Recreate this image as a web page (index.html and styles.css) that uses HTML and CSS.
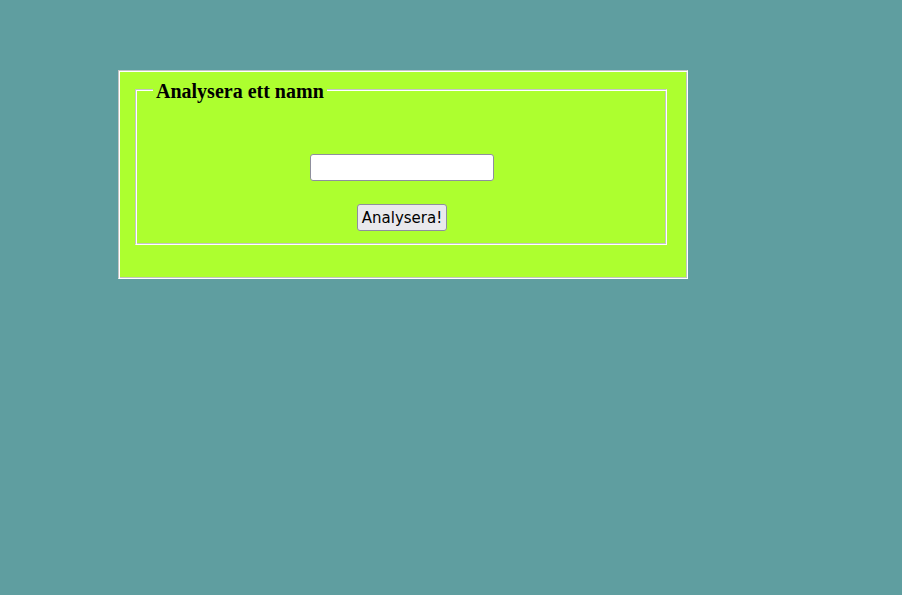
FILE: index.html
```html
<!DOCTYPE html>
<html lang="sv">
<head>
<meta charset="utf-8">
<title>Analysera ett namn</title>
<link rel="stylesheet" href="styles.css">
</head>
<body>
<form class="box">
  <fieldset class="group">
    <legend class="title">Analysera ett namn</legend>
    <div class="fields">
      <input class="name-input" type="text">
      <button class="submit" type="button">Analysera!</button>
    </div>
  </fieldset>
</form>
</body>
</html>
```
FILE: styles.css
```css
html, body {
  margin: 0;
  padding: 0;
}
body {
  background: #5f9ea0;
  font-family: "Liberation Serif", "Times New Roman", serif;
  width: 902px;
  height: 595px;
  overflow: hidden;
}
.box {
  box-sizing: border-box;
  margin: 70px 0 0 118px;
  width: 570px;
  height: 209px;
  padding: 5px 16px 0 16px;
  background: #adff2f;
  border: 1px solid;
  border-color: #c4c4c4 #fff #fff #c4c4c4;
  box-shadow: inset 1px 1px #fff, inset -1px -1px #c4c4c4;
}
.group {
  box-sizing: border-box;
  margin: 0;
  width: 532px;
  height: 169px;
  padding: 0 17px;
  border: 1px solid;
  border-color: #c4c4c4 #fff #fff #c4c4c4;
  box-shadow: inset 1px 1px #fff, inset -1px -1px #c4c4c4;
}
.title {
  padding: 4px 3px 0 3px;
  font-size: 20px;
  font-weight: bold;
  line-height: 22px;
  color: #000;
  background: #adff2f;
}
.fields {
  display: flex;
  flex-direction: column;
  align-items: center;
  padding-top: 52px;
  padding-left: 2px;
  gap: 23px;
}
.name-input {
  box-sizing: border-box;
  width: 184px;
  height: 27px;
  margin: 0;
  border: 1px solid #8f8f9d;
  border-radius: 3px;
  background: #fff;
}
.submit {
  box-sizing: border-box;
  height: 27px;
  margin: 0;
  padding: 0 4px;
  font-family: "DejaVu Sans", Verdana, sans-serif;
  font-size: 15px;
  color: #000;
  background: #e9e9ed;
  border: 1px solid #8f8f9d;
  border-radius: 3px;
}
```
